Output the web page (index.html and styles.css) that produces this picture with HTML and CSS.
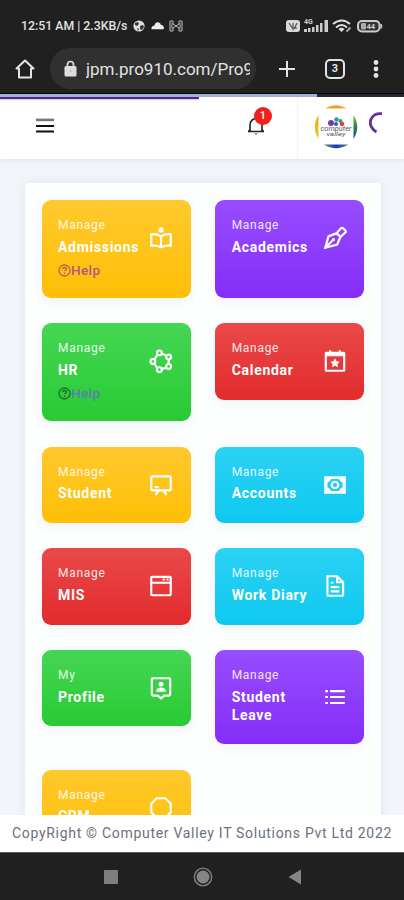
FILE: index.html
```html
<!DOCTYPE html>
<html lang="en">
<head>
<meta charset="UTF-8">
<title>Dashboard</title>
<meta name="viewport" content="width=device-width, initial-scale=1.0">
<link rel="stylesheet" href="styles.css">
</head>
<body>
<div class="statusbar">
<span class="clock">12:51 AM | 2.3KB/s</span>
<svg class="st-ball" width="12" height="12" viewBox="0 0 12 12"><circle cx="6" cy="6" r="5.6" fill="#ddd"/><path d="M2 3l3-1 1 2-2 2-2-1zM7 6l3-1 1 2-2 3-2-1zM4 8l2 1-1 2" fill="#333"/></svg>
<svg class="st-cloud" width="13" height="9" viewBox="0 0 13 9"><path d="M.5 8.300C0 6 2 4.500 3.500 4.500 4 .500 9 0 10 4c2.500 0 3.500 2.500 2.500 4.300z" fill="#eee"/></svg>
<svg class="st-cast" width="14" height="12" viewBox="0 0 14 12" fill="none" stroke="#bbb"><path d="M4 1H1v10h3V8l3-2 3 2v3h3V1h-3v3L7 6 4 4zM3 3v6M11 3v6"/></svg>
<svg class="st-right" width="97" height="16" viewBox="0 0 97 16">
<rect x="0" y="2" width="14" height="12" rx="3" fill="#d8d8d8"/>
<path d="M3 5l4 6V5M8 11l3-6M10 9v2" fill="none" stroke="#555" stroke-width="1.200"/>
<text x="18" y="6" class="net">4G</text>
<path d="M18 14v-3h3v3zM22 14v-4h2.500v4zM26 14V9h2.500v5zM30 14V7h2.500v7zM34 14V5h2.500v9zM38.500 14V2H42v12z" fill="#ccc"/>
<g fill="none" stroke="#ddd" stroke-width="2"><path d="M47 6q9-7 17 0M50 9.500q5.500-5 11 0"/></g>
<path d="M52.500 11q3-2.500 6 0L55.500 14z" fill="#ddd"/><path d="M60.500 13.500l4-4" stroke="#aaa" stroke-width="2"/>
<rect x="72" y="3" width="21.500" height="10.500" rx="4" fill="#333" stroke="#ccc" stroke-width="2"/>
<path d="M95 6q2 2 0 4.500z" fill="#ccc" stroke="#ccc"/>
<rect x="75" y="5" width="5" height="6.500" rx="1" fill="#aaa"/>
<text x="80.500" y="11" class="batt">44</text>
</svg>
</div>

<div class="browserbar">
<svg class="home" width="20" height="20" viewBox="0 0 20 20"><path d="M10 1.500L1.500 9.500H4V18.500H16V9.500H18.500z" fill="none" stroke="#e4e4e4" stroke-width="2" stroke-linejoin="round"/></svg>
<div class="address">
<svg width="13" height="17" viewBox="0 0 13 17"><path d="M3.500 7V4.500a3 3 0 0 1 6 0V7" fill="none" stroke="#ddd" stroke-width="1.700"/><rect x=".5" y="6" width="12" height="10.500" rx="1.500" fill="#ddd"/><circle cx="6.500" cy="11" r="1" fill="#bbb"/></svg>
<span>jpm.pro910.com/Pro9</span>
</div>
<svg class="plus" width="16" height="16" viewBox="0 0 16 16"><path d="M8 0v16M0 8h16" stroke="#e4e4e4" stroke-width="2"/></svg>
<div class="tabs">3</div>
<svg class="dots" width="6" height="18" viewBox="0 0 6 18" fill="#e4e4e4"><circle cx="3" cy="2.500" r="2.400"/><circle cx="3" cy="9" r="2.400"/><circle cx="3" cy="15.500" r="2.400"/></svg>
</div>
<div class="loadbar"><div class="loaded"></div></div>

<header class="topbar">
<div class="pageload"></div>
<svg class="menu" width="18" height="16" viewBox="0 0 18 16"><path d="M0 1.900h18" stroke="#777" stroke-width="2.600"/><path d="M0 8h18M0 13.500h18" stroke="#111" stroke-width="2.200"/></svg>
<div class="bell">
<svg width="18" height="20" viewBox="0 0 18 20"><path d="M1 15.500h16M3 15V9a6 6.500 0 0 1 12 0v6M1.500 15.500L3.500 13M16.500 15.500L14.500 13" fill="none" stroke="#222" stroke-width="1.600"/><path d="M7 17.500h4l-2 1.500z" fill="#555"/></svg>
<span class="badge">1</span>
</div>
<div class="user">
<svg class="logo" width="44" height="46" viewBox="0 0 44 46">
<defs>
<linearGradient id="lt"><stop offset="0" stop-color="#f3b91c"/><stop offset=".5" stop-color="#f09a1c"/><stop offset="1" stop-color="#e2c03a"/></linearGradient>
<linearGradient id="ll" x2="0" y2="1"><stop offset="0" stop-color="#f2a81d"/><stop offset="1" stop-color="#d9cf2a"/></linearGradient>
<linearGradient id="lr" x2="0" y2="1"><stop offset="0" stop-color="#8db52b"/><stop offset=".5" stop-color="#21874c"/><stop offset="1" stop-color="#2536a8"/></linearGradient>
<linearGradient id="lb"><stop offset="0" stop-color="#38a04a"/><stop offset=".5" stop-color="#2436c4"/><stop offset="1" stop-color="#3f8f50"/></linearGradient>
</defs>
<path d="M11 4.500Q22-2 33 4.500z" fill="url(#lt)"/>
<path d="M4.500 11Q-3 23 4.500 35z" fill="url(#ll)"/>
<path d="M39.500 11Q47 23 39.500 35z" fill="url(#lr)"/>
<path d="M10 40.500Q22 48 34 40.500z" fill="url(#lb)"/>
<circle cx="17" cy="19" r="3" fill="#7a35b4"/><circle cx="22.500" cy="15.500" r="2.300" fill="#269ac0"/><circle cx="26.500" cy="17" r="2" fill="#3aa35a"/><circle cx="28" cy="20" r="2.300" fill="#e04040"/><circle cx="22" cy="20" r="2" fill="#3058c8"/>
<text x="22" y="27" class="brand" textLength="31" lengthAdjust="spacingAndGlyphs">computer</text>
<text x="22" y="31.500" class="brand small" textLength="19" lengthAdjust="spacingAndGlyphs">valley</text>
</svg>
</div>
<svg class="spinner" width="14" height="21" viewBox="0 0 14 21"><path d="M13 1.700C4 .5-1 8.500 2.500 15Q4.500 18.500 7.500 20" fill="none" stroke="#65309a" stroke-width="2.800"/></svg>
</header>

<main class="page">
<div class="panel">
<a class="card yellow">
<div class="row">
<div class="text"><small>Manage</small><b>Admissions</b></div>
<svg class="icon" viewBox="0 0 24 24"><circle cx="12" cy="4.500" r="2.500" class="solid"/><path d="M3 8.500Q8 8 12 10.500Q16 8 21 8.500V19Q16 18.500 12 20.500Q8 18.500 3 19zM12 10.500v10"/></svg>
</div>
<span class="help"><svg width="13" height="13" viewBox="0 0 13 13"><circle cx="6.500" cy="6.500" r="5.500"/><path d="M4.500 5.200q0-1.700 2-1.700t2 1.600q0 1-2 1.900M6.500 8.500v1.500"/></svg>Help</span>
</a>
<a class="card purple tall">
<div class="row">
<div class="text"><small>Manage</small><b>Academics</b></div>
<svg class="icon" viewBox="0 0 24 24"><path d="M3 21L6 10.500L13.500 7.500L17 11L14 18zM13.500 7.500L17.500 3Q18.500 2 19.500 3L21.500 5Q22.500 6 21.500 7L17 11M3.500 20.500L9.500 14.500"/><circle cx="10.500" cy="13.500" r="1.500" class="solid"/></svg>
</div>
</a>
<a class="card green">
<div class="row">
<div class="text"><small>Manage</small><b>HR</b></div>
<svg class="icon" viewBox="0 0 24 24"><path d="M6 10.500L8.500 6.500M12.500 5L16.500 6.800M19 10.500v4M16.500 18.200L12.500 19.500M8.500 18.500L6 14.500"/><circle cx="10.500" cy="4.500" r="2.200"/><circle cx="19" cy="8.300" r="2.200"/><circle cx="19" cy="17" r="2.200"/><circle cx="10.500" cy="20" r="2.200"/><circle cx="4.500" cy="12.500" r="2.200"/></svg>
</div>
<span class="help dark"><svg width="13" height="13" viewBox="0 0 13 13"><circle cx="6.500" cy="6.500" r="5.500"/><path d="M4.500 5.200q0-1.700 2-1.700t2 1.600q0 1-2 1.900M6.500 8.500v1.500"/></svg>Help</span>
</a>
<a class="card red">
<div class="row">
<div class="text"><small>Manage</small><b>Calendar</b></div>
<svg class="icon" viewBox="0 0 24 24"><path d="M4 4.500h16q.5 0 .5.500v15.500q0 .5-.5.500H4q-.5 0-.5-.5V5q0-.5.500-.5zM3.500 6.500h17M7.500 2v4M16.500 2v4"/><path d="M12 9.500l1.400 2.700 3 .4-2.200 2.100.6 3-2.800-1.400-2.800 1.400.6-3-2.200-2.100 3-.4z" class="solid"/></svg>
</div>
</a>
<a class="card yellow">
<div class="row">
<div class="text"><small>Manage</small><b>Student</b></div>
<svg class="icon" viewBox="0 0 24 24"><path d="M4 4h16q1 0 1 1v11q0 1-1 1H4q-1 0-1-1V5q0-1 1-1zM10 17l-3 4M14 17l3 4M6 14h4"/></svg>
</div>
</a>
<a class="card cyan">
<div class="row">
<div class="text"><small>Manage</small><b>Accounts</b></div>
<svg class="icon" viewBox="0 0 24 24"><path d="M2 4h20v16H2zM8.500 6.500Q7.500 9 5 10v4q2.500 1 3.500 3.500h7q1-2.500 3.500-3.500v-4q-2.500-1-3.500-3.500z" class="solid" fill-rule="evenodd"/><circle cx="12" cy="12" r="3"/></svg>
</div>
</a>
<a class="card red">
<div class="row">
<div class="text"><small>Manage</small><b>MIS</b></div>
<svg class="icon" viewBox="0 0 24 24"><path d="M4 3.500h16q1 0 1 1v15q0 1-1 1H4q-1 0-1-1v-15q0-1 1-1zM3 9h18M13.500 6h2M17 6h2"/></svg>
</div>
</a>
<a class="card cyan">
<div class="row">
<div class="text"><small>Manage</small><b>Work Diary</b></div>
<svg class="icon" viewBox="0 0 24 24"><path d="M5 3h9l5.500 5.500V20q0 1-1 1H6q-1 0-1-1zM14 3v5.500h5.500M8 9h2.500M8 13h8M8 17h8"/></svg>
</div>
</a>
<a class="card green">
<div class="row">
<div class="text"><small>My</small><b>Profile</b></div>
<svg class="icon" viewBox="0 0 24 24"><path d="M4.500 3h15q1 0 1 1v14q0 1-1 1H15l-3 2.500L9 19H4.500q-1 0-1-1V4q0-1 1-1z"/><circle cx="12" cy="8.500" r="2.300" class="solid"/><path d="M7.500 15.500q0-4 4.500-4t4.500 4z" class="solid"/></svg>
</div>
</a>
<a class="card purple">
<div class="row">
<div class="text"><small>Manage</small><b>Student Leave</b></div>
<svg class="icon" viewBox="0 0 24 24"><path d="M7.500 6.500H21M7.500 12H21M7.500 17.500H21M3 6.500h2.500M3 12h2.500M3 17.500h2.500"/></svg>
</div>
</a>
<a class="card yellow">
<div class="row">
<div class="text"><small>Manage</small><b>CRM</b></div>
<svg class="icon" viewBox="0 0 24 24"><path d="M8 3h8l5 5v8l-5 5H8l-5-5V8z"/></svg>
</div>
</a>
</div>
</main>

<footer class="copyright">CopyRight © Computer Valley IT Solutions Pvt Ltd 2022</footer>

<nav class="navbar">
<svg width="14" height="14" viewBox="0 0 14 14"><rect width="14" height="14" rx="1" fill="#7e7e7e"/></svg>
<svg width="20" height="20" viewBox="0 0 20 20"><circle cx="10" cy="10" r="8.700" fill="none" stroke="#7a7a7a" stroke-width="1.600"/><circle cx="10" cy="10" r="6.500" fill="#858585"/></svg>
<svg width="14" height="16" viewBox="0 0 14 16"><path d="M13 .5v15L.5 8z" fill="#858585"/></svg>
</nav>
</body>
</html>
```
FILE: styles.css
```css
* {
box-sizing: border-box;
}

body {
margin: 0;
height: 900px;
display: flex;
flex-direction: column;
overflow: hidden;
font-family: Roboto, "Liberation Sans", sans-serif;
background: #f4f5fa;
}

svg {
display: block;
flex: none;
}

/* phone chrome */
.statusbar {
display: flex;
align-items: center;
height: 47px;
padding: 4px 21px 0;
background: #202020;
color: #e2e2e2;
}

.clock {
font-size: 12.3px;
font-weight: 500;
width: 109px;
white-space: nowrap;
}

.st-ball {
margin-left: 3px;
}

.st-cloud {
margin-left: 6px;
}

.st-cast {
margin-left: 5px;
}

.st-right {
margin-left: auto;
}

.net {
font-size: 7px;
font-weight: 700;
fill: #ccc;
}

.batt {
font-size: 7.5px;
font-weight: 700;
fill: #ccc;
}

.browserbar {
display: flex;
align-items: center;
height: 46px;
padding: 0 25px 3px 15px;
background: #202020;
color: #e2e2e2;
}

.address {
display: flex;
align-items: center;
gap: 9px;
width: 206px;
height: 41px;
margin: 0 23px 0 15px;
padding: 0 6px 0 14px;
border-radius: 21px;
background: #303030;
font-size: 17px;
}

.address span {
overflow: hidden;
white-space: nowrap;
}

.tabs {
width: 20px;
height: 20px;
margin: 0 28px 0 30px;
border: 2px solid #e4e4e4;
border-radius: 5px;
font-size: 11px;
font-weight: 700;
line-height: 16px;
text-align: center;
}

.loadbar {
height: 4px;
border-top: 1px solid #080808;
background: #252832;
}

.loaded {
width: 317px;
height: 3px;
background: #a5b2da;
}

/* app header */
.topbar {
position: relative;
display: flex;
align-items: center;
flex: none;
height: 62px;
padding: 0 0 4px 36px;
background: #fff;
box-shadow: 0 1px 5px rgba(60, 60, 90, 0.12);
}

.pageload {
position: absolute;
left: 0;
top: 0;
width: 199px;
height: 2px;
background: #54288c;
box-shadow: 0 1px 1px #d5c2ea;
}

.bell {
position: relative;
margin-left: 193px;
}

.badge {
position: absolute;
left: 7px;
top: -9px;
width: 18px;
height: 18px;
border-radius: 50%;
background: #f2201d;
color: #fff;
font-size: 11px;
font-weight: 500;
line-height: 18px;
text-align: center;
}

.user {
display: flex;
align-items: center;
height: 62px;
margin: 4px 0 0 32px;
padding-left: 16px;
border-left: 1px solid #f3f3f6;
}

.logo {
margin-bottom: 2px;
}

.brand {
font-size: 7px;
font-style: italic;
text-anchor: middle;
fill: #555;
}

.small {
font-size: 6px;
}

.spinner {
margin: -7px 0 0 11px;
}

/* dashboard */
.page {
flex: 1;
min-height: 0;
overflow: hidden;
padding: 24px 23px 0 25px;
}

.panel {
display: grid;
grid-template-columns: 149px 149px;
gap: 25.4px 24.7px;
min-height: 700px;
padding: 17px 16.5px;
border-radius: 4px;
background: #fdfefe;
box-shadow: 0 0 12px rgba(80, 90, 130, 0.1);
align-items: start;
align-content: start;
}

.card {
min-height: 76.3px;
padding: 17px 16.5px;
border-radius: 9px;
color: #fff;
box-shadow: 0 3px 12px rgba(80, 90, 130, 0.07);
}

.tall {
min-height: 98px;
}

.yellow {
background: linear-gradient(#ffc92e, #ffbf05);
}

.purple {
background: linear-gradient(#974dff, #852df8);
}

.green {
background: linear-gradient(#46d654, #27cb33);
}

.red {
background: linear-gradient(#ea4949, #e22b2d);
}

.cyan {
background: linear-gradient(#2bd2f4, #0fc8ef);
}

.row {
display: flex;
align-items: center;
justify-content: space-between;
min-height: 42px;
}

.text small {
display: block;
font-size: 12px;
line-height: 17px;
letter-spacing: 0.7px;
opacity: 0.88;
}

.text b {
display: block;
padding: 3.5px 0;
font-size: 14px;
font-weight: 700;
line-height: 18px;
letter-spacing: 0.7px;
}

.icon {
width: 26px;
height: 26px;
fill: none;
stroke: #fff;
stroke-width: 2;
}

.icon .solid {
fill: #fff;
stroke: none;
}

.help {
display: flex;
align-items: center;
height: 22px;
font-size: 13.5px;
font-weight: 500;
letter-spacing: 0.4px;
color: #b4558a;
}

.help svg {
fill: none;
stroke: #b4604f;
stroke-width: 1.3;
}

.help.dark {
color: #587fae;
}

.help.dark svg {
stroke: #1b6a2a;
}

/* bottom */
.copyright {
position: relative;
flex: none;
height: 37px;
background: #fff;
color: #6b7080;
font-size: 14px;
line-height: 36px;
letter-spacing: 0.7px;
text-align: center;
white-space: nowrap;
}

.navbar {
display: flex;
align-items: center;
flex: none;
gap: 75px;
height: 48px;
padding-left: 104px;
border-top: 1px solid #555;
background: #202020;
}
```
